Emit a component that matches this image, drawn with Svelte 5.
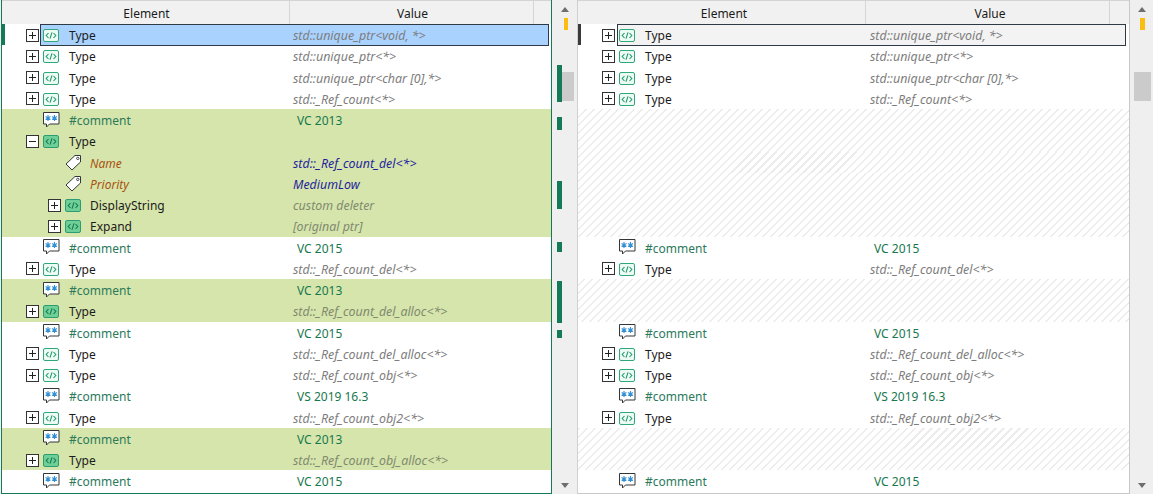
<script>
  const rows = [
    { k: 'type', n: 'Type', v: 'std::unique_ptr<void, *>', sel: true },
    { k: 'type', n: 'Type', v: 'std::unique_ptr<*>' },
    { k: 'type', n: 'Type', v: 'std::unique_ptr<char [0],*>' },
    { k: 'type', n: 'Type', v: 'std::_Ref_count<*>' },
    { k: 'comment', n: '#comment', v: 'VC 2013', only: true },
    { k: 'type', n: 'Type', v: '', open: true, only: true },
    { k: 'attr', n: 'Name', v: 'std::_Ref_count_del<*>', only: true },
    { k: 'attr', n: 'Priority', v: 'MediumLow', only: true },
    { k: 'type', n: 'DisplayString', v: 'custom deleter', child: true, only: true },
    { k: 'type', n: 'Expand', v: '[original ptr]', child: true, only: true },
    { k: 'comment', n: '#comment', v: 'VC 2015' },
    { k: 'type', n: 'Type', v: 'std::_Ref_count_del<*>' },
    { k: 'comment', n: '#comment', v: 'VC 2013', only: true },
    { k: 'type', n: 'Type', v: 'std::_Ref_count_del_alloc<*>', only: true },
    { k: 'comment', n: '#comment', v: 'VC 2015' },
    { k: 'type', n: 'Type', v: 'std::_Ref_count_del_alloc<*>' },
    { k: 'type', n: 'Type', v: 'std::_Ref_count_obj<*>' },
    { k: 'comment', n: '#comment', v: 'VS 2019 16.3' },
    { k: 'type', n: 'Type', v: 'std::_Ref_count_obj2<*>' },
    { k: 'comment', n: '#comment', v: 'VC 2013', only: true },
    { k: 'type', n: 'Type', v: 'std::_Ref_count_obj_alloc<*>', only: true },
    { k: 'comment', n: '#comment', v: 'VC 2015' }
  ];
  const marks = [[65, 37], [117, 13], [181, 28], [242, 10], [281, 42], [330, 8]];
</script>

{#snippet codeIcon()}
  <svg class="ico code" width="16" height="13" viewBox="0 0 16 13">
    <rect class="codebox" x="0.5" y="0.5" width="15" height="12" rx="1.5" />
    <path class="codeglyph" d="M5.5 4 3.2 6.5l2.3 2.5M10.5 4 12.8 6.5l-2.3 2.5M9 3.3 7 9.7" />
  </svg>
{/snippet}

{#snippet commentIcon()}
  <svg class="ico comm" width="17" height="16" viewBox="0 0 17 16">
    <path d="M0.5 0.5h15.5v11.5H6.5L3.5 15v-3H0.5z" fill="#fff" stroke="#33373a" />
    <path d="M5 3v6M2.6 4.5l4.8 3M7.4 4.5l-4.8 3M11.5 3v6M9.1 4.5l4.8 3M13.9 4.5l-4.8 3" stroke="#2f8fd6" stroke-width="1.1" fill="none" />
  </svg>
{/snippet}

{#snippet tagIcon()}
  <svg class="ico comm" width="17" height="17" viewBox="0 0 17 17">
    <path d="M1 10 10 1.5h5.5v6.5L7 16z" fill="#fff" stroke="#33373a" stroke-linejoin="round" />
    <circle cx="12.8" cy="4.4" r="1.2" fill="#fff" stroke="#33373a" stroke-width="0.9" />
  </svg>
{/snippet}

{#snippet expander(open)}
  <svg class="exp" width="13" height="13" viewBox="0 0 13 13">
    <rect x="0.5" y="0.5" width="12" height="12" fill="#fff" stroke="#333" />
    <path d={open ? 'M3 6.5h7' : 'M3 6.5h7M6.5 3v7'} stroke="#222" fill="none" />
  </svg>
{/snippet}

{#snippet pane(isLeft)}
  <section class="pane" class:left={isLeft} class:right={!isLeft}>
    <header class="head">
      <div class="hcell elem">Element</div>
      <div class="hcell val">Value</div>
      <div class="hcell end"></div>
    </header>
    <div class="body">
      {#each rows as r}
        {#if !isLeft && r.only}
          <div class="row hatch"></div>
        {:else}
          <div class="row" class:changed={isLeft && r.only} class:first={r.sel}>
            <div class="gutter"></div>
            <div class="name {r.k}" class:child={r.child}>
              {#if r.sel}<span class="selbox"></span>{/if}
              <span class="tree">
                {#if r.k === 'type'}
                  {@render expander(r.open)}
                  {@render codeIcon()}
                {:else if r.k === 'comment'}
                  {@render commentIcon()}
                {:else}
                  {@render tagIcon()}
                {/if}
              </span>
              <span class="label">{r.n}</span>
              <span class="value {r.k}">{r.v}</span>
            </div>
          </div>
        {/if}
      {/each}
    </div>
  </section>
{/snippet}

<main class="app">
  {@render pane(true)}
  <aside class="scroll sl">
    <span class="arrow up"></span>
    <span class="mark"></span>
    {#each marks as m}
      <span class="diff" style="top:{m[0]}px;height:{m[1]}px"></span>
    {/each}
    <span class="thumb"></span>
    <span class="arrow down"></span>
  </aside>
  {@render pane(false)}
  <aside class="scroll sr">
    <span class="arrow up"></span>
    <span class="mark"></span>
    <span class="thumb"></span>
    <span class="arrow down"></span>
  </aside>
</main>

<style>
  :global(body) {
    margin: 0;
    background: #fff;
  }
  .app {
    display: flex;
    width: 1153px;
    height: 494px;
    overflow: hidden;
    font-family: "Noto Sans", "Open Sans", sans-serif;
    font-size: 12px;
    color: #1b1b1b;
    background: #efefef;
  }
  .pane {
    box-sizing: border-box;
    height: 494px;
    display: flex;
    flex-direction: column;
    background: #fff;
  }
  .pane.left {
    border-left: 1px solid #147a5a;
    border-right: 1px solid #147a5a;
    border-bottom: 1px solid #147a5a;
    width: 551px;
    margin-left: 1px;
  }
  .pane.right {
    border-left: 1px solid #d0d0d0;
    border-right: 1px solid #c8c8c8;
    border-bottom: 1px solid #c8c8c8;
    width: 553px;
  }
  .head {
    flex: none;
    display: flex;
    height: 24px;
    box-sizing: border-box;
    border-top: 1px solid #d4d4d4;
    background: #f1f1f1;
  }
  .hcell {
    box-sizing: border-box;
    display: flex;
    align-items: center;
    justify-content: center;
    border-right: 1px solid #d6d6d6;
    padding: 2px 0 0 2px;
    height: 23px;
  }
  .right .hcell { padding-left: 5px; }
  .elem { width: 288px; }
  .val { width: 244px; }
  .end { flex: 1; border-right: 0; }
  .body {
    flex: 1;
    overflow: hidden;
    display: flex;
    flex-direction: column;
  }
  .row {
    flex: none;
    height: 21.25px;
    position: relative;
    display: flex;
  }
  .row.changed { background: #d6e5ab; }
  .row.hatch {
    background: repeating-linear-gradient(135deg, #fff 0 4.2px, #ececec 4.2px 5.66px) fixed;
  }
  .gutter { width: 3px; flex: none; }
  .row.first .gutter { background: #147a5a; }
  .right .row.first .gutter { background: #3a3a3a; }
  .name {
    flex: 1;
    min-width: 0;
    display: flex;
    align-items: center;
    position: relative;
  }
  .selbox {
    position: absolute;
    top: 0;
    height: 22px;
    box-sizing: border-box;
    border: 1px solid #2e3a46;
  }
  .left .selbox { left: 35px; right: 2px; background: #a9d2ff; }
  .right .selbox { left: 36px; right: 3px; background: #f3f3f3; }
  .tree {
    flex: none;
    width: 64px;
    box-sizing: border-box;
    display: flex;
    align-items: center;
    padding-left: 21px;
    position: relative;
  }
  .name.comment .tree { padding-left: 38px; }
  .name.attr .tree { width: 85px; padding-left: 60px; }
  .name.child .tree { width: 85px; padding-left: 43px; }
  .exp { flex: none; margin-right: 4px; margin-top: 1px; }
  .ico { flex: none; display: block; margin-top: 2px; }
  .ico.comm { margin-top: 0; }
  .codebox { fill: #eefaf4; stroke: #2fa87a; }
  .codeglyph { fill: none; stroke: #1f9a6c; stroke-width: 1.1; }
  .changed .codebox { fill: #6fcf97; stroke: #2a9d72; }
  .changed .codeglyph { stroke: #127a52; }
  .label {
    flex: none;
    width: 224px;
    white-space: nowrap;
    padding-top: 2px;
    position: relative;
  }
  .right .label { width: 225px; }
  .name.attr .label, .name.child .label { width: 203px; }
  .name.comment .label { color: #2b7a5b; }
  .name.attr .label { color: #a8520f; font-style: italic; }
  .value {
    white-space: nowrap;
    font-style: italic;
    font-size: 12.4px;
    color: #7d7d7d;
    padding-top: 2px;
    position: relative;
  }
  .value.comment {
    font-style: normal;
    font-size: 12px;
    color: #17784f;
    padding-left: 4px;
  }
  .value.attr { color: #1f1f9e; }
  .changed .value.type { color: #7f8a70; }
  .scroll {
    flex: none;
    position: relative;
    background: #efefef;
  }
  .sl { width: 25px; }
  .sr { width: 23px; }
  .arrow {
    position: absolute;
    width: 0;
    height: 0;
    left: 8px;
    border-left: 4px solid transparent;
    border-right: 4px solid transparent;
  }
  .sl .arrow { left: 9px; }
  .arrow.up { top: 7px; border-bottom: 5px solid #6e6e6e; }
  .arrow.down { bottom: 6px; border-top: 5px solid #6e6e6e; }
  .mark {
    position: absolute;
    top: 18px;
    height: 12px;
    width: 5px;
    background: #fbbd12;
  }
  .sl .mark { left: 12px; width: 4px; }
  .sr .mark { left: 10px; }
  .diff {
    position: absolute;
    left: 5px;
    width: 5px;
    background: #147a5a;
  }
  .thumb {
    position: absolute;
    top: 72px;
    height: 29px;
    background: #cbcbcb;
  }
  .sl .thumb { left: 10px; width: 12px; }
  .sr .thumb { left: 4px; width: 17px; }
</style>
